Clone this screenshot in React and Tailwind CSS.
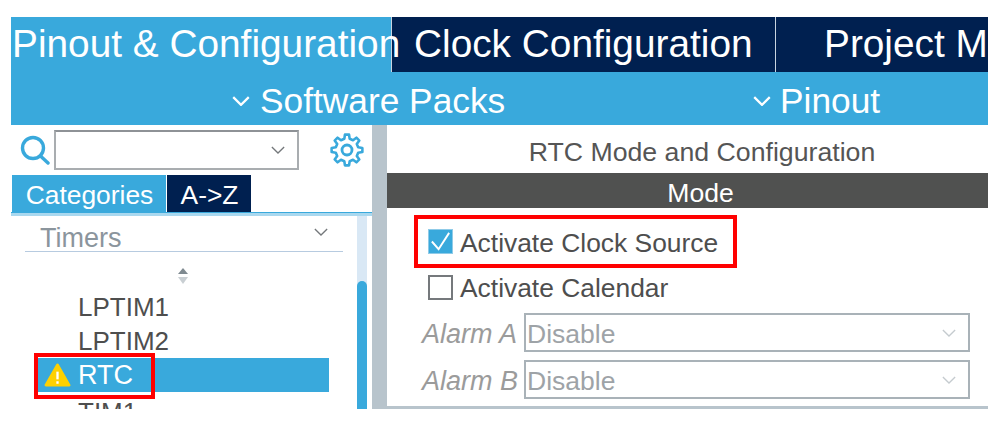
const FONT = "font-['Liberation_Sans',Arial,sans-serif]";

function Chevron({ className, stroke = "#ffffff", width = 2 }) {
  return (
    <svg viewBox="0 0 16 9" className={className} fill="none">
      <polyline points="1,1 8,8 15,1" stroke={stroke} strokeWidth={width} />
    </svg>
  );
}

function gearPath(cx, cy, outer, inner, teeth) {
  const pts = [];
  const step = (Math.PI * 2) / teeth;
  for (let i = 0; i < teeth; i++) {
    const a = i * step - Math.PI / 2;
    const t = step * 0.17;
    const s = step * 0.3;
    pts.push([a - s, inner], [a - t, outer], [a + t, outer], [a + s, inner]);
  }
  return (
    pts
      .map(([a, r], i) => `${i ? "L" : "M"}${(cx + r * Math.cos(a)).toFixed(2)} ${(cy + r * Math.sin(a)).toFixed(2)}`)
      .join(" ") + " Z"
  );
}

function GearIcon() {
  return (
    <svg viewBox="0 0 34 34" className="w-[34px] h-[34px]" fill="none" stroke="#39a9dc">
      <path d={gearPath(17, 17, 15.5, 11.5, 8)} strokeWidth="2.6" strokeLinejoin="round" />
      <circle cx="17" cy="17" r="5" strokeWidth="2.8" />
    </svg>
  );
}

function SearchIcon() {
  return (
    <svg viewBox="0 0 30 30" className="w-[30px] h-[30px]" fill="none" stroke="#39a9dc">
      <circle cx="13" cy="13" r="10.5" strokeWidth="3.4" />
      <line x1="20.5" y1="21" x2="28" y2="28" strokeWidth="3.4" strokeLinecap="round" />
    </svg>
  );
}

function WarningIcon() {
  return (
    <svg viewBox="0 0 28 26" className="w-[27px] h-[25px]">
      <path d="M14 2 L26 23 H2 Z" fill="#fed100" stroke="#fed100" strokeWidth="3" strokeLinejoin="round" />
      <rect x="12.8" y="9" width="2.4" height="8" fill="#ffffff" />
      <rect x="12.8" y="19" width="2.4" height="2.6" fill="#ffffff" />
    </svg>
  );
}

function SortIcon() {
  return (
    <svg viewBox="0 0 12 16" className="w-[12px] h-[16px]">
      <polygon points="6,0 11,6 1,6" fill="#7f8a90" />
      <polygon points="6,16 11,9 1,9" fill="#c9cfd3" />
    </svg>
  );
}

function Checkbox({ checked }) {
  if (checked) {
    return (
      <div className="w-[25px] h-[25px] bg-[#39a9dc] border border-[#8fcbe8] flex items-center justify-center">
        <svg viewBox="0 0 24 24" className="w-[23px] h-[23px]" fill="none">
          <polyline points="3,12 10,20 21,3" stroke="#ffffff" strokeWidth="2" />
        </svg>
      </div>
    );
  }
  return <div className="w-[25px] h-[25px] bg-white border-2 border-[#75797c]" />;
}

function AlarmRow({ label }) {
  return (
    <div className="flex items-center h-[39px]">
      <span className="w-[102px] text-right pr-[7px] pt-[4px] italic text-[27px] text-[#9b9b9b] whitespace-nowrap leading-none">{label}</span>
      <div className="w-[446px] h-[39px] border-2 border-[#a9b2b8] flex items-center justify-between pl-[1px] pr-[12px]">
        <span className="text-[26.5px] pt-[4px] leading-none text-[#9ea3a7]">Disable</span>
        <Chevron className="w-[14px] h-[8px]" stroke="#c5cbcf" width={1.5} />
      </div>
    </div>
  );
}

export default function App() {
  return (
    <div className={`${FONT} w-[998px] h-[436px] bg-white pt-[17px] pl-[11px] overflow-hidden`}>
      <div className="w-[977px]">
        {/* top tabs */}
        <div className="flex h-[55px] overflow-hidden">
          <div className="relative z-10 w-[380px] shrink-0 bg-[#39a9dc] text-white text-[38.8px] leading-[54px] pl-[1px] whitespace-nowrap">
            Pinout &amp; Configuration
          </div>
          <div className="w-[385px] shrink-0 bg-[#002050] border-l border-[#c8d4e0] border-r text-white text-[38.8px] leading-[54px] pl-[22px] whitespace-nowrap">
            Clock Configuration
          </div>
          <div className="flex-1 bg-[#002050] text-white text-[38.8px] leading-[54px] pl-[48px] whitespace-nowrap overflow-hidden">
            Project Manager
          </div>
        </div>

        {/* sub menu */}
        <div className="flex items-center h-[53px] bg-[#39a9dc] text-white text-[35.3px]">
          <div className="w-[221px]" />
          <Chevron className="w-[18px] h-[10px] mr-[10px] mt-[4px]" width={2} />
          <span className="w-[493px] whitespace-nowrap pt-[5px]">Software Packs</span>
          <Chevron className="w-[18px] h-[10px] mr-[9px] mt-[4px]" width={2} />
          <span className="pt-[5px]">Pinout</span>
        </div>

        <div className="flex h-[284px]">
          {/* left panel */}
          <div className="w-[361px] shrink-0 overflow-hidden">
            <div className="flex items-center h-[50px] pl-[9px]">
              <SearchIcon />
              <div className="ml-[4px] w-[245px] h-[40px] border-2 border-[#a9adb0] border-t-[#8e9296] flex items-center justify-end pr-[12px]">
                <Chevron className="w-[14px] h-[8px]" stroke="#74787b" width={1.5} />
              </div>
              <div className="ml-[31px]"><GearIcon /></div>
            </div>
            <div className="flex h-[37px] pl-[1px] text-white text-[26.4px] leading-[40px]">
              <div className="w-[154px] pl-[1px] bg-[#39a9dc] text-center">Categories</div>
              <div className="ml-[1px] w-[84px] pl-[1px] bg-[#002050] text-center">A-&gt;Z</div>
            </div>
            <div className="h-[1px] bg-[#39a9dc]" />
            <div className="h-[3px] bg-[#a9d8ef]" />

            <div className="flex h-[193px] overflow-hidden">
              <div className="w-[346px] overflow-hidden">
                <div className="ml-[14px] w-[318px] h-[36px] border-b border-[#b7cbe0] flex items-center justify-between pl-[15px] pr-[15px] text-[27px] text-[#8b959d]">
                  <span className="pt-[9px]">Timers</span>
                  <Chevron className="w-[14px] h-[8px] mb-[4px]" stroke="#74787b" width={1.5} />
                </div>
                <div className="flex justify-center pr-[2px] mt-[16px] h-[16px]"><SortIcon /></div>
                <div className="mt-[6px] pl-[67px] text-[26px] leading-[34px] text-[#4e4e4e]">LPTIM1</div>
                <div className="pl-[67px] text-[26px] leading-[34px] text-[#4e4e4e]">LPTIM2</div>
                <div className="relative ml-[27px] w-[291px] h-[34px] bg-[#39a9dc] flex items-center pl-[6px] text-[27px] text-white">
                  <WarningIcon />
                  <span className="ml-[7px] leading-none">RTC</span>
                  <div className="absolute left-[-4px] top-[-5px] w-[121px] h-[46px] border-[4px] border-[#ff0000]" />
                </div>
                <div className="pl-[67px] mt-[6px] text-[26px] leading-[28px] text-[#4e4e4e]">TIM1</div>
              </div>
              <div className="w-[10px] h-full ml-0 bg-[#d9e8f5] flex flex-col justify-end">
                <div className="h-[128px] bg-[#39a9dc] rounded-t-[5px]" />
              </div>
            </div>
          </div>

          {/* splitter */}
          <div className="w-[15px] shrink-0 bg-[#b8c4cc]" />

          {/* right panel */}
          <div className="flex-1 flex flex-col">
            <div className="h-[48px] flex items-center justify-center pl-[29px] pt-[7px] text-[26.7px] text-[#555555]">RTC Mode and Configuration</div>
            <div className="h-[35px] bg-[#505150] flex items-center justify-center pl-[26px] pt-[6px] text-white text-[26.6px]">Mode</div>
            <div className="relative pt-[21px] pl-[41px]">
              <div className="flex items-center h-[25px]">
                <Checkbox checked />
                <span className="ml-[7px] pt-[3px] text-[26.4px] leading-none text-[#4e4e4e]">Activate Clock Source</span>
              </div>
              <div className="absolute left-[27px] top-[7px] w-[323px] h-[53px] border-[4px] border-[#ff0000]" />
              <div className="flex items-center h-[25px] mt-[21px]">
                <Checkbox />
                <span className="ml-[7px] pt-[2px] text-[26.4px] leading-none text-[#4e4e4e]">Activate Calendar</span>
              </div>
            </div>
            <div className="mt-[13px] pl-[35px] flex flex-col gap-[8px]">
              <AlarmRow label="Alarm A" />
              <AlarmRow label="Alarm B" />
            </div>
            <div className="mt-auto h-[3px] bg-[#b8c4cc]" />
          </div>
        </div>
      </div>
    </div>
  );
}
